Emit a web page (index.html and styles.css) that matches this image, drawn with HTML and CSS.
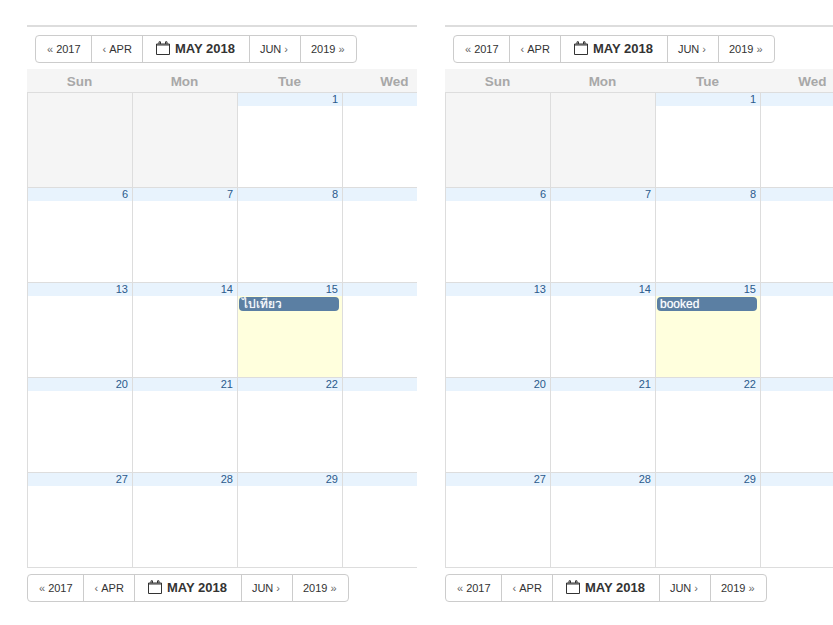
FILE: index.html
```html
<!DOCTYPE html>
<html lang="th">
<head>
  <meta charset="UTF-8">
  <title>Calendar</title>
  <link rel="stylesheet" href="styles.css">
</head>
<body>
  <div class="page">
    <div class="panel">
      <div class="nav nav-top">
        <a class="btn"><span class="arrow">«</span> 2017</a><a class="btn"><span class="arrow">‹</span> APR</a>
        <a class="btn btn-month"><svg class="cal-icon" viewBox="0 0 14 14"><path d="M.5 3h13v10.500h-13z M.5 4h13 M3 3V.8h1.500V3 M9.500 3V.8H11V3"/></svg>MAY 2018</a>
        <a class="btn btn-next">JUN <span class="arrow">›</span></a><a class="btn btn-next">2019 <span class="arrow">»</span></a>
      </div>
      <div class="calendar">
        <div class="head">Sun</div><div class="head">Mon</div><div class="head">Tue</div><div class="head">Wed</div><div class="head">Thu</div><div class="head">Fri</div><div class="head">Sat</div>
        <div class="day empty"></div><div class="day empty"></div><div class="day"><div class="num">1</div></div><div class="day"><div class="num">2</div></div><div class="day"><div class="num">3</div></div><div class="day"><div class="num">4</div></div><div class="day"><div class="num">5</div></div>
        <div class="day"><div class="num">6</div></div><div class="day"><div class="num">7</div></div><div class="day"><div class="num">8</div></div><div class="day"><div class="num">9</div></div><div class="day"><div class="num">10</div></div><div class="day"><div class="num">11</div></div><div class="day"><div class="num">12</div></div>
        <div class="day"><div class="num">13</div></div><div class="day"><div class="num">14</div></div><div class="day today"><div class="num">15</div><div class="event">ไปเที่ยว</div></div><div class="day"><div class="num">16</div></div><div class="day"><div class="num">17</div></div><div class="day"><div class="num">18</div></div><div class="day"><div class="num">19</div></div>
        <div class="day"><div class="num">20</div></div><div class="day"><div class="num">21</div></div><div class="day"><div class="num">22</div></div><div class="day"><div class="num">23</div></div><div class="day"><div class="num">24</div></div><div class="day"><div class="num">25</div></div><div class="day"><div class="num">26</div></div>
        <div class="day"><div class="num">27</div></div><div class="day"><div class="num">28</div></div><div class="day"><div class="num">29</div></div><div class="day"><div class="num">30</div></div><div class="day"><div class="num">31</div></div><div class="day empty"></div><div class="day empty"></div>
      </div>
      <div class="nav nav-bottom">
        <a class="btn"><span class="arrow">«</span> 2017</a><a class="btn"><span class="arrow">‹</span> APR</a>
        <a class="btn btn-month"><svg class="cal-icon" viewBox="0 0 14 14"><path d="M.5 3h13v10.500h-13z M.5 4h13 M3 3V.8h1.500V3 M9.500 3V.8H11V3"/></svg>MAY 2018</a>
        <a class="btn btn-next">JUN <span class="arrow">›</span></a><a class="btn btn-next">2019 <span class="arrow">»</span></a>
      </div>
    </div>

    <div class="panel">
      <div class="nav nav-top">
        <a class="btn"><span class="arrow">«</span> 2017</a><a class="btn"><span class="arrow">‹</span> APR</a>
        <a class="btn btn-month"><svg class="cal-icon" viewBox="0 0 14 14"><path d="M.5 3h13v10.500h-13z M.5 4h13 M3 3V.8h1.500V3 M9.500 3V.8H11V3"/></svg>MAY 2018</a>
        <a class="btn btn-next">JUN <span class="arrow">›</span></a><a class="btn btn-next">2019 <span class="arrow">»</span></a>
      </div>
      <div class="calendar">
        <div class="head">Sun</div><div class="head">Mon</div><div class="head">Tue</div><div class="head">Wed</div><div class="head">Thu</div><div class="head">Fri</div><div class="head">Sat</div>
        <div class="day empty"></div><div class="day empty"></div><div class="day"><div class="num">1</div></div><div class="day"><div class="num">2</div></div><div class="day"><div class="num">3</div></div><div class="day"><div class="num">4</div></div><div class="day"><div class="num">5</div></div>
        <div class="day"><div class="num">6</div></div><div class="day"><div class="num">7</div></div><div class="day"><div class="num">8</div></div><div class="day"><div class="num">9</div></div><div class="day"><div class="num">10</div></div><div class="day"><div class="num">11</div></div><div class="day"><div class="num">12</div></div>
        <div class="day"><div class="num">13</div></div><div class="day"><div class="num">14</div></div><div class="day today"><div class="num">15</div><div class="event">booked</div></div><div class="day"><div class="num">16</div></div><div class="day"><div class="num">17</div></div><div class="day"><div class="num">18</div></div><div class="day"><div class="num">19</div></div>
        <div class="day"><div class="num">20</div></div><div class="day"><div class="num">21</div></div><div class="day"><div class="num">22</div></div><div class="day"><div class="num">23</div></div><div class="day"><div class="num">24</div></div><div class="day"><div class="num">25</div></div><div class="day"><div class="num">26</div></div>
        <div class="day"><div class="num">27</div></div><div class="day"><div class="num">28</div></div><div class="day"><div class="num">29</div></div><div class="day"><div class="num">30</div></div><div class="day"><div class="num">31</div></div><div class="day empty"></div><div class="day empty"></div>
      </div>
      <div class="nav nav-bottom">
        <a class="btn"><span class="arrow">«</span> 2017</a><a class="btn"><span class="arrow">‹</span> APR</a>
        <a class="btn btn-month"><svg class="cal-icon" viewBox="0 0 14 14"><path d="M.5 3h13v10.500h-13z M.5 4h13 M3 3V.8h1.500V3 M9.500 3V.8H11V3"/></svg>MAY 2018</a>
        <a class="btn btn-next">JUN <span class="arrow">›</span></a><a class="btn btn-next">2019 <span class="arrow">»</span></a>
      </div>
    </div>
  </div>
</body>
</html>
```

FILE: styles.css
```css
html, body {
  margin: 0;
  padding: 0;
  height: 625px;
  overflow: hidden;
  background: #fff;
}

body {
  font-family: "Liberation Sans", Arial, "Noto Sans", sans-serif;
  color: #333;
}

.page {
  display: flex;
  gap: 28px;
  width: 833px;
  padding: 25px 0 0 27px;
  box-sizing: border-box;
  overflow: hidden;
}

.panel {
  flex: 0 0 390px;
  width: 390px;
  overflow: hidden;
  border-top: 2px solid #ddd;
}

.nav {
  display: flex;
  width: max-content;
}

.nav-top {
  margin: 8px 0 6px 8px;
}

.nav-bottom {
  margin: 6px 0 0;
}

.btn {
  display: flex;
  align-items: center;
  gap: 3px;
  height: 28px;
  box-sizing: border-box;
  padding: 0 10px 0 11px;
  margin-left: -1px;
  border: 1px solid #ccc;
  background: #fff;
  font-size: 11px;
  color: #333;
}

.btn:first-child {
  margin-left: 0;
  border-radius: 4px 0 0 4px;
}

.btn:last-child {
  border-radius: 0 4px 4px 0;
}

.btn-next {
  padding: 0 12px 0 10px;
}

.btn-next:last-child {
  padding-right: 11px;
}

.arrow {
  color: #666;
}

.btn-month {
  gap: 5px;
  padding: 0 14px 2px 13px;
  font-size: 13px;
  font-weight: bold;
}

.cal-icon {
  width: 14px;
  height: 14px;
  fill: none;
  stroke: #333;
  stroke-width: 1;
}

.calendar {
  display: grid;
  grid-template-columns: repeat(7, 105px);
  grid-template-rows: 24px repeat(5, 95px);
  width: 735px;
}

.head {
  background: #f5f5f5;
  border-bottom: 1px solid #ddd;
  color: #a8a8a8;
  font-size: 13.5px;
  font-weight: bold;
  line-height: 25px;
  text-align: center;
}

.day {
  border-left: 1px solid #ddd;
  border-bottom: 1px solid #ddd;
  box-sizing: border-box;
}

.day.empty {
  background: #f5f5f5;
}

.day.today {
  background: #ffd;
}

.num {
  height: 13px;
  padding-right: 4px;
  background: #e8f3fd;
  color: #2a5a8c;
  font-size: 11px;
  line-height: 13px;
  text-align: right;
}

.event {
  margin: 1px 3px 0 1px;
  height: 14px;
  padding-left: 3px;
  border-radius: 4px;
  background: #5b7fa3;
  color: #fff;
  font-size: 12px;
  line-height: 14px;
  text-shadow: 0 0 1px rgba(255, 255, 255, 0.6);
}
```
